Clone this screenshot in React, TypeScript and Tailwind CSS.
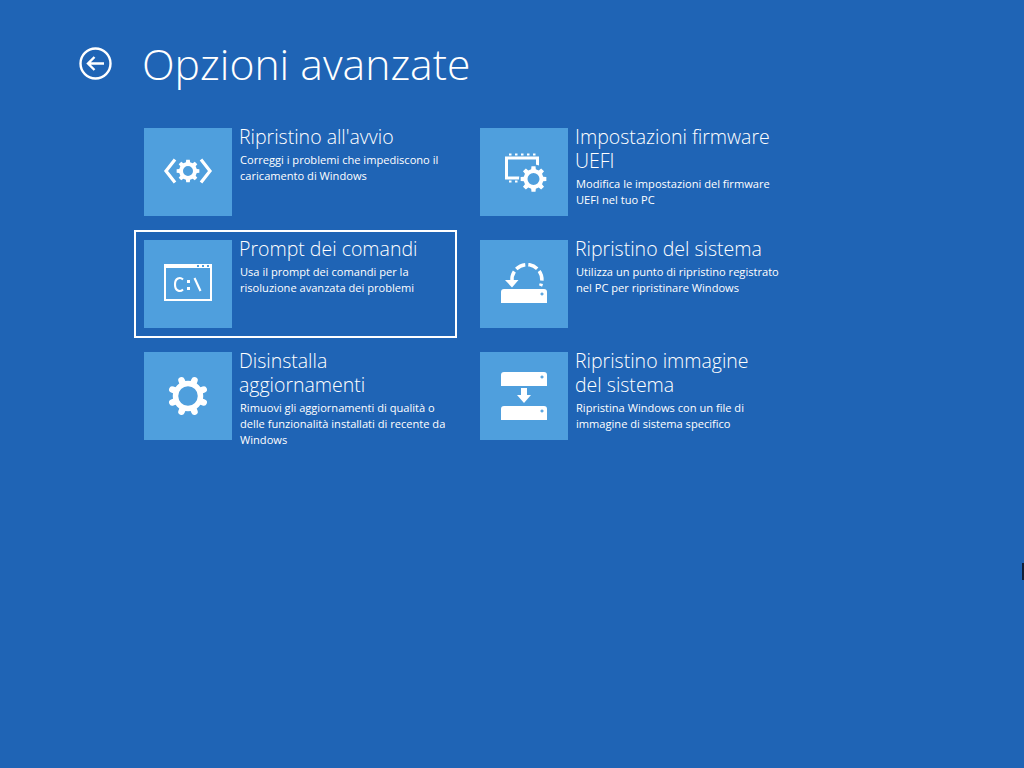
import React from 'react'

// builds a cog outline: teeth around a ring, with the hole cut by evenodd
function gearPath(cx: number, cy: number, outer: number, root: number, hole: number, teeth: number) {
  const pts: string[] = []
  const step = (Math.PI * 2) / teeth
  for (let i = 0; i < teeth; i++) {
    const a = i * step - Math.PI / 2
    const list: [number, number][] = [
      [root, a - step * 0.3],
      [outer, a - step * 0.2],
      [outer, a + step * 0.2],
      [root, a + step * 0.3],
    ]
    list.forEach(([r, t]) => pts.push(`${(cx + r * Math.cos(t)).toFixed(2)} ${(cy + r * Math.sin(t)).toFixed(2)}`))
  }
  const ring = `M${pts.join('L')}Z`
  const h = `M${cx - hole} ${cy}a${hole} ${hole} 0 1 0 ${hole * 2} 0a${hole} ${hole} 0 1 0 ${-hole * 2} 0Z`
  return ring + h
}

function RepairIcon() {
  return (
    <svg width="88" height="88" viewBox="0 0 88 88" fill="none">
      <path d={gearPath(44, 43, 11.500, 9, 5, 8)} fill="white" fillRule="evenodd" />
      <path d="M31 31.500 L22 43 L31 54.500" stroke="white" strokeWidth="3.200" />
      <path d="M57 31.500 L66 43 L57 54.500" stroke="white" strokeWidth="3.200" />
    </svg>
  )
}

function CmdIcon() {
  return (
    <svg width="88" height="88" viewBox="0 0 88 88" fill="none">
      <rect x="21" y="25" width="46" height="35" stroke="white" strokeWidth="2" />
      <rect x="20" y="24" width="48" height="4" fill="white" />
      <rect x="53" y="25" width="2" height="2" fill="#4f9fdd" />
      <rect x="58" y="25" width="2" height="2" fill="#4f9fdd" />
      <rect x="63" y="25" width="2" height="2" fill="#4f9fdd" />
      <path d="M39 39.500 C36 36.500 31 38 31 44.500 C31 51 36 52.500 39 49.500" stroke="white" strokeWidth="2.100" />
      <rect x="43" y="40" width="3" height="3" fill="white" />
      <rect x="43" y="47" width="3" height="3" fill="white" />
      <path d="M50.500 38 L56.500 51" stroke="white" strokeWidth="2.100" />
    </svg>
  )
}

function GearIcon() {
  // eight rounded lobes, two of them side by side at the top
  const lobes = [22.5, 67.5, 112.5, 157.5, 202.5, 247.5, 292.5, 337.5]
  return (
    <svg width="88" height="88" viewBox="0 0 88 88" fill="none">
      <circle cx="44" cy="44" r="12.500" stroke="white" strokeWidth="5.500" />
      {lobes.map((deg) => {
        const t = (deg * Math.PI) / 180
        return (
          <line
            key={deg}
            x1={44 + 13.5 * Math.cos(t)}
            y1={44 + 13.5 * Math.sin(t)}
            x2={44 + 17 * Math.cos(t)}
            y2={44 + 17 * Math.sin(t)}
            stroke="white"
            strokeWidth="6.500"
            strokeLinecap="round"
          />
        )
      })}
    </svg>
  )
}

function FirmwareIcon() {
  return (
    <svg width="88" height="88" viewBox="0 0 88 88" fill="none">
      <rect x="26.500" y="30" width="31" height="20" stroke="white" strokeWidth="3" />
      {[29, 35, 41, 47, 53].map((x) => (
        <rect key={x} x={x} y="25.500" width="2.500" height="2" fill="white" />
      ))}
      {[29, 35].map((x) => (
        <rect key={x} x={x} y="52.500" width="2.500" height="2" fill="white" />
      ))}
      <circle cx="53.500" cy="51" r="14.500" fill="#4f9fdd" />
      <path d={gearPath(53.500, 51, 13, 10, 6, 8)} fill="white" fillRule="evenodd" />
    </svg>
  )
}

function Drive({ y }: { y: number }) {
  return (
    <>
      <path d={`M21 ${y + 3}q0 -3 3 -3H64q3 0 3 3V${y + 14}H21Z`} fill="white" />
      <path d={`M62 ${y + 3.500}v3M60.500 ${y + 5}h3`} stroke="#4f9fdd" strokeWidth="1.300" />
    </>
  )
}

function RestoreIcon() {
  return (
    <svg width="88" height="88" viewBox="0 0 88 88" fill="none">
      <Drive y={49} />
      <path
        d="M32 41 A 15 15 0 1 1 60.500 46"
        stroke="white"
        strokeWidth="3.500"
        strokeDasharray="10 3"
      />
      <path d="M25 40H38.500L32 47.500Z" fill="white" />
    </svg>
  )
}

function ImageIcon() {
  return (
    <svg width="88" height="88" viewBox="0 0 88 88" fill="none">
      <Drive y={20} />
      <Drive y={54} />
      <path d="M41 36H47V43H51L44 51L37 43H41Z" fill="white" />
    </svg>
  )
}

const items = [
  {
    title: ["Ripristino all'avvio"],
    text: ['Correggi i problemi che impediscono il', 'caricamento di Windows'],
    icon: RepairIcon,
  },
  {
    title: ['Impostazioni firmware', 'UEFI'],
    text: ['Modifica le impostazioni del firmware', 'UEFI nel tuo PC'],
    icon: FirmwareIcon,
  },
  {
    title: ['Prompt dei comandi'],
    text: ['Usa il prompt dei comandi per la', 'risoluzione avanzata dei problemi'],
    icon: CmdIcon,
    selected: true,
  },
  {
    title: ['Ripristino del sistema'],
    text: ['Utilizza un punto di ripristino registrato', 'nel PC per ripristinare Windows'],
    icon: RestoreIcon,
  },
  {
    title: ['Disinstalla', 'aggiornamenti'],
    text: ['Rimuovi gli aggiornamenti di qualità o', 'delle funzionalità installati di recente da', 'Windows'],
    icon: GearIcon,
  },
  {
    title: ['Ripristino immagine', 'del sistema'],
    text: ['Ripristina Windows con un file di', 'immagine di sistema specifico'],
    icon: ImageIcon,
  },
]

export default function App() {
  return (
    <div className="relative h-[768px] w-[1024px] overflow-hidden bg-[#1f64b5] font-['Open_Sans',sans-serif] text-white">
      {/* Header */}
      <header className="flex h-[128px] items-start pl-[79px] pt-[47px]">
        <svg width="33" height="33" viewBox="0 0 33 33" fill="none">
          <circle cx="16.500" cy="16.500" r="15" stroke="white" strokeWidth="2.400" />
          <path d="M25 16.500H9M15.500 10L9 16.500L15.500 23" stroke="white" strokeWidth="2.400" />
        </svg>
        <h1 className="ml-[30px] mt-[-11px] text-[42.700px] leading-[56px] font-light">Opzioni avanzate</h1>
      </header>

      {/* Options */}
      <div className="ml-[134px] mt-[-10px] grid w-[660px] grid-cols-[323px_323px] gap-x-[13px] gap-y-[4px]">
        {items.map((item) => {
          const Icon = item.icon
          return (
            <div
              key={item.title[0]}
              className={`flex h-[108px] gap-[7px] border-2 p-[8px] ${item.selected ? 'border-white' : 'border-transparent'}`}
            >
              <div className="h-[88px] w-[88px] shrink-0 bg-[#4f9fdd]">
                <Icon />
              </div>
              <div className="min-w-0 whitespace-nowrap">
                <div className="mt-[-3px] text-[19.500px] leading-[24px] font-light">
                  {item.title.map((line) => (
                    <div key={line}>{line}</div>
                  ))}
                </div>
                <div className="mt-[3px] pl-[1px] text-[11.100px] leading-[16px]">
                  {item.text.map((line) => (
                    <div key={line}>{line}</div>
                  ))}
                </div>
              </div>
            </div>
          )
        })}
      </div>

      {/* cursor sliver at the screen edge */}
      <div className="absolute right-0 top-[563px] h-[17px] w-[2px] bg-[#10203a]" />
    </div>
  )
}
